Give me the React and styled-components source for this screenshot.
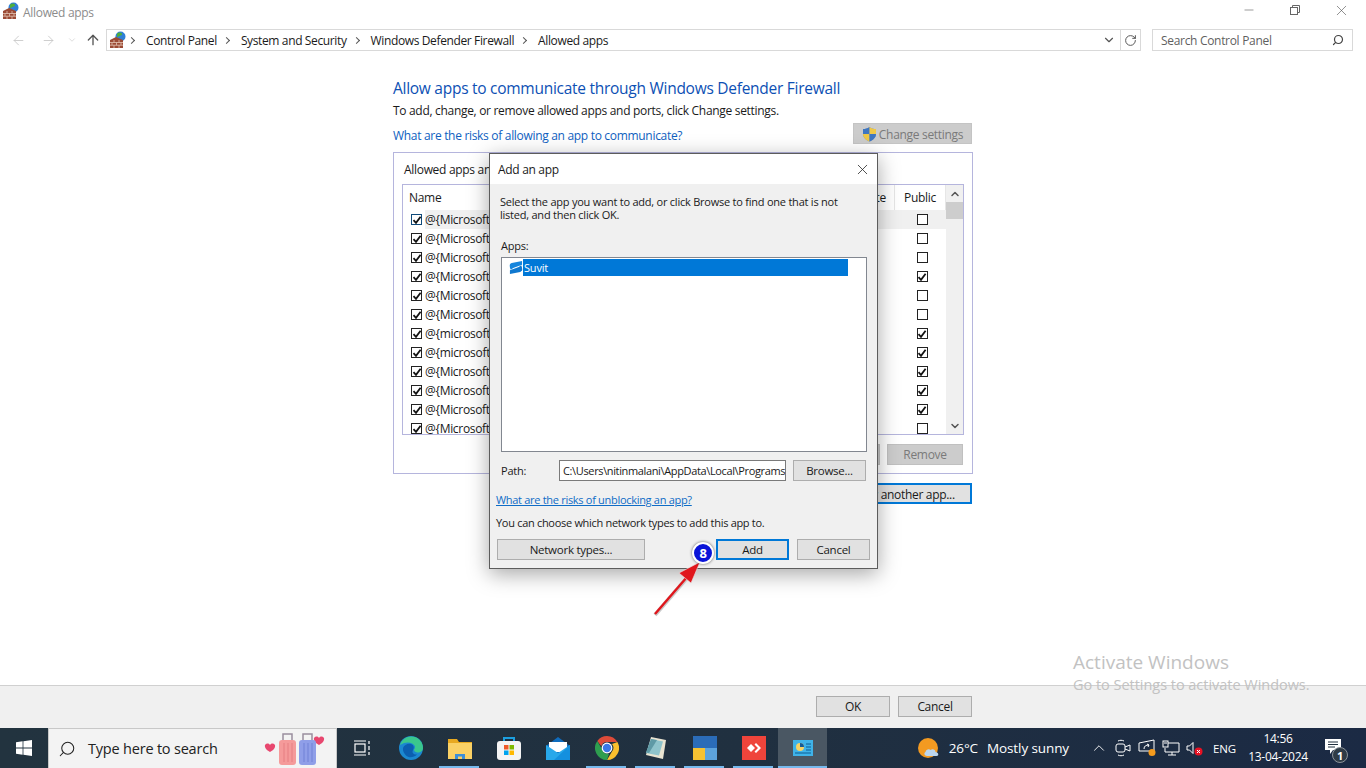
import React from 'react';
import styled, { createGlobalStyle } from 'styled-components';
import { Search, ArrowLeft, ArrowRight, ArrowUp, ChevronDown, ChevronUp, RotateCw, X, Minus } from 'lucide-react';

const GlobalStyle = createGlobalStyle`
  html, body { margin: 0; padding: 0; background: #fff; overflow: hidden; }
  * { box-sizing: border-box; }
  body { font-family: "Open Sans", "Liberation Sans", sans-serif; font-size: 12px; letter-spacing: -0.31px; color: #1a1a1a; }
`;

const publicChecks = [0, 0, 0, 1, 0, 0, 1, 1, 1, 1, 1, 0];
const rowNames = ['Microsoft', 'Microsoft', 'Microsoft', 'Microsoft', 'Microsoft', 'Microsoft', 'microsoft', 'microsoft', 'Microsoft', 'Microsoft', 'Microsoft', 'Microsoft'];

const FirewallIcon = ({ size = 18 }) => (
  <svg width={size} height={size} viewBox="0 0 18 18">
    <circle cx="11.5" cy="5.5" r="5" fill="#2f7fd6" />
    <path d="M8 2.5c2-1.5 4-1.500 5 0 .5 1.500-1 2-2.500 2.500S8.500 7 8 5.500z" fill="#4fae3c" />
    <path d="M1 9l6-3 7 3v8H1z" fill="#9b4a35" />
    <path d="M1 11.500h13M1 14.200h13M5 9v2.500M10 9v2.500M3 11.500v2.700M7.500 11.500v2.700M12 11.500v2.700M5 14.200V17M10 14.200V17" stroke="#e2c3b3" strokeWidth=".8" fill="none" />
  </svg>
);

const ShieldIcon = () => (
  <svg width="15" height="16" viewBox="0 0 15 16">
    <path d="M7.500 1C5.500 2.500 3.500 3 1 3v5c0 3.500 3 6 6.500 7.500C11 14 14 11.500 14 8V3c-2.500 0-4.500-.5-6.500-2z" fill="#6d93c4" />
    <path d="M7.500 1v7H1V3c2.500 0 4.500-.5 6.500-2z" fill="#3f76c0" />
    <path d="M7.500 1c2 1.500 4 2 6.500 2v5H7.500z" fill="#f0c846" />
    <path d="M7.500 8H1c0 3.500 3 6 6.500 7.500z" fill="#f0c846" />
    <path d="M7.500 8H14c0 3.500-3 6-6.500 7.500z" fill="#3f76c0" />
  </svg>
);

const SuvitLogo = () => (
  <svg width="15" height="15" viewBox="0 0 15 15">
    <path d="M14 .5v4L4.500 8 2 10C1 8.500 .8 6 .8 5c0-1 1.200-1.800 2.200-2.200z" fill="#1585dc" />
    <path d="M1 14.500v-4l9.500-3.500L13 5c1 1.500 1.200 4 1.200 5 0 1-1.200 1.800-2.200 2.200z" fill="#0f78cf" />
  </svg>
);

const CheckMark = () => (
  <svg width="10" height="10" viewBox="0 0 10 10">
    <path d="M1.500 5.200L4 7.800L8.600 1.800" fill="none" stroke="#111" strokeWidth="1.800" />
  </svg>
);

const WindowsLogo = () => (
  <svg width="16" height="16" viewBox="0 0 16 16">
    <path d="M0 2.300L6.600 1.300V7.600H0zM7.400 1.200L16 0V7.600H7.400zM0 8.400H6.600V14.700L0 13.700zM7.400 8.400H16V16L7.400 14.800z" fill="#fff" />
  </svg>
);

const LuggageArt = () => (
  <svg width="62" height="36" viewBox="0 0 62 36">
    <path d="M6 14c-2-3-6-1-5 2 .5 2 3 4 5 5 2-1 4.500-3 5-5 1-3-3-5-5-2z" fill="#e8476f" />
    <path d="M55 7c-2-3-6-1-5 2 .5 2 3 4 5 5 2-1 4.500-3 5-5 1-3-3-5-5-2z" fill="#e8476f" />
    <path d="M19 10V3h9v7M39 10V3h9v7" fill="none" stroke="#9a8f9f" strokeWidth="1.500" />
    <rect x="15" y="9" width="17" height="25" rx="3" fill="#f59a9a" />
    <rect x="35" y="9" width="17" height="25" rx="3" fill="#8f9ee8" />
    <path d="M20 12v19M24 12v19M28 12v19" stroke="#e67f82" strokeWidth="1" />
    <path d="M40 12v19M44 12v19M48 12v19" stroke="#7181d6" strokeWidth="1" />
  </svg>
);

const TaskViewIcon = () => (
  <svg width="16" height="16" viewBox="0 0 16 16" fill="none" stroke="#fff" strokeWidth="1.200">
    <path d="M0 1h12M0 15h12" />
    <rect x="1" y="4" width="10" height="8" />
    <path d="M15 1v3M15 6v4M15 12v3" />
  </svg>
);

const EdgeIcon = () => (
  <svg width="24" height="24" viewBox="0 0 24 24">
    <circle cx="12" cy="12" r="12" fill="#1b88d0" />
    <path d="M1 9C3 2 10-1 16 1c5 2 8 6 8 11 0 3-3 5-6 4.500-2-.5-3-1.500-3-3 1-1 1.500-2.500 .5-4C13 6 7 5 1 9z" fill="#3ac78d" />
    <path d="M4 12c1-3 5-5 8-4 3 1 3.500 4 2 6-1.500 3 1 5 4 4.500-3 3-8 4-11 1-2-2-3.500-5-3-7.500z" fill="#0b5fb0" />
  </svg>
);

const ExplorerIcon = () => (
  <svg width="24" height="22" viewBox="0 0 24 22">
    <path d="M0 2h9l2 3h13v17H0z" fill="#e8a920" />
    <rect x="0" y="6" width="24" height="16" fill="#fad165" />
    <path d="M7 22v-5h10v5h-3v-2.500h-4V22z" fill="#3d8fd8" />
  </svg>
);

const StoreIcon = () => (
  <svg width="24" height="24" viewBox="0 0 24 24">
    <path d="M7 6V2h10v4" fill="none" stroke="#1c9fe0" strokeWidth="2" />
    <rect x="0" y="5" width="24" height="19" rx="3" fill="#f4f4f4" />
    <rect x="7" y="9" width="4.500" height="4.500" fill="#ef5a29" />
    <rect x="12.500" y="9" width="4.500" height="4.500" fill="#7fba00" />
    <rect x="7" y="14.500" width="4.500" height="4.500" fill="#00a4ef" />
    <rect x="12.500" y="14.500" width="4.500" height="4.500" fill="#ffb900" />
  </svg>
);

const MailIcon = () => (
  <svg width="24" height="23" viewBox="0 0 24 23">
    <path d="M0 9L12 0l12 9v14H0z" fill="#0f6cbd" />
    <path d="M3 5h18v10H3z" fill="#fff" />
    <path d="M0 8l12 8 12-8v15H0z" fill="#28a8ea" />
    <path d="M24 8v15H8z" fill="#1490df" />
  </svg>
);

const ChromeIcon = () => (
  <svg width="24" height="24" viewBox="0 0 24 24">
    <path d="M12 0a12 12 0 0 1 10.400 6H12a6 6 0 0 0-5.700 4.200L2.300 5A12 12 0 0 1 12 0z" fill="#dd4b39" />
    <path d="M22.400 6A12 12 0 0 1 12 24l5-8.500A6 6 0 0 0 17 8z" fill="#fbc02d" />
    <path d="M12 24A12 12 0 0 1 2.300 5l5 8.800A6 6 0 0 0 14 17.700z" fill="#2e9e4f" />
    <circle cx="12" cy="12" r="5.400" fill="#fff" />
    <circle cx="12" cy="12" r="4.200" fill="#3b78e7" />
  </svg>
);

const NotepadIcon = () => (
  <svg width="24" height="24" viewBox="0 0 24 24">
    <path d="M7 1l15 3-3 19-17-4z" fill="#e9e4d2" />
    <path d="M7 3l12 2.500-4 14L2 17z" fill="#8fc4cc" />
    <path d="M7 3l6 1-8 13-3-.5z" fill="#5f9aa6" />
  </svg>
);

const TilesIcon = () => (
  <svg width="24" height="24" viewBox="0 0 24 24">
    <rect width="24" height="12" fill="#2b6cb8" />
    <rect y="12" width="12" height="12" fill="#f6c232" />
    <rect x="12" y="12" width="12" height="12" fill="#5da3dc" />
  </svg>
);

const AnyDeskIcon = () => (
  <svg width="24" height="24" viewBox="0 0 24 24">
    <rect width="24" height="24" fill="#ef443b" />
    <path d="M9 8l4 4-4 4-4-4z" fill="#fff" />
    <path d="M14 7l5 5-5 5-1.500-1.500L16 12l-3.500-3.500z" fill="#fff" />
  </svg>
);

const PanelAppIcon = () => (
  <svg width="20" height="16" viewBox="0 0 20 16">
    <rect width="20" height="16" fill="#3fb3e8" />
    <circle cx="7" cy="7" r="4" fill="#f6d365" />
    <path d="M7 3v4h4a4 4 0 0 0-4-4z" fill="#155b96" />
    <path d="M13 4h5M13 7h5M13 10h5M2 13h16" stroke="#0d5f94" strokeWidth="1.200" />
  </svg>
);

const WeatherIcon = () => (
  <svg width="22" height="22" viewBox="0 0 22 22">
    <circle cx="10" cy="11" r="10" fill="#f39a21" />
    <path d="M9 19c-2.500 0-3.500-3-1.500-4 .5-2.500 3.500-3.500 5-2 2-1.500 5-.5 5 2 3 0 4 4 1 4z" fill="#bcd6ee" />
  </svg>
);

const MeetIcon = () => (
  <svg width="16" height="18" viewBox="0 0 16 18" fill="none" stroke="#fff" strokeWidth="1">
    <rect x="1" y="5" width="9" height="8" rx="2" />
    <path d="M10 8l5-2v6l-5-2M3 2c2-1 4-1 6 0M3 16c2 1 4 1 6 0" />
  </svg>
);

const CastIcon = () => (
  <svg width="18" height="18" viewBox="0 0 18 18" fill="none" stroke="#fff" strokeWidth="1">
    <path d="M1 4l15-3v11H1z" />
    <path d="M6 10c0-3 2-4 5-4M9 5l2 1-1 2" />
    <circle cx="14" cy="13.500" r="3.500" fill="#f59b1d" stroke="none" />
  </svg>
);

const NetworkIcon = () => (
  <svg width="18" height="16" viewBox="0 0 18 16" fill="none" stroke="#fff" strokeWidth="1">
    <path d="M6 3h11v9H3V8M10 12v3M6 15h8" />
    <rect x="1" y="1" width="5" height="6" />
    <path d="M2 3h3" />
  </svg>
);

const VolumeIcon = () => (
  <svg width="18" height="18" viewBox="0 0 18 18">
    <path d="M1 7h2.500L7 3.500v11L3.500 11H1z" fill="none" stroke="#fff" strokeWidth="1" />
    <circle cx="12.500" cy="12.500" r="4" fill="#e81123" />
    <path d="M11 11l3 3M14 11l-3 3" stroke="#fff" strokeWidth="1" />
  </svg>
);

const NoticeIcon = () => (
  <svg width="16" height="15" viewBox="0 0 16 15">
    <path d="M0 0h16v11H8l-3 4v-4H0z" fill="#fff" />
    <path d="M3 3h10M3 5.500h10M3 8h7" stroke="#22303e" strokeWidth="1" />
  </svg>
);

const RestoreGlyph = () => (
  <svg width="10" height="10" viewBox="0 0 10 10" fill="none" stroke="#666" strokeWidth="1">
    <rect x=".5" y="2.500" width="7" height="7" />
    <path d="M2.500 2.500V.5h7v7h-2" />
  </svg>
);

const App = () => (
  <>
    <GlobalStyle />
    <Page>
      <TitleBar>
        <TitleIcon><FirewallIcon /></TitleIcon>
        <TitleText>Allowed apps</TitleText>
        <WindowControls>
          <WindowButton><Minus size={14} strokeWidth={1} /></WindowButton>
          <WindowButton><RestoreGlyph /></WindowButton>
          <WindowButton><X size={17} strokeWidth={0.9} /></WindowButton>
        </WindowControls>
      </TitleBar>

      <NavBar>
        <NavButtons>
          <NavArrow $faded><ArrowLeft size={15} strokeWidth={1.4} /></NavArrow>
          <NavArrow $faded><ArrowRight size={15} strokeWidth={1.4} /></NavArrow>
          <NavArrow $faded $narrow><ChevronDown size={10} strokeWidth={1.5} /></NavArrow>
          <NavArrow><ArrowUp size={16} strokeWidth={2} /></NavArrow>
        </NavButtons>
        <AddressBar>
          <AddressIcon><FirewallIcon /></AddressIcon>
          <Crumb>Control Panel</Crumb>
          <Crumb>System and Security</Crumb>
          <Crumb>Windows Defender Firewall</Crumb>
          <Crumb>Allowed apps</Crumb>
          <AddressTools>
            <AddressTool><ChevronDown size={14} strokeWidth={2} color="#555" /></AddressTool>
            <AddressTool $divided><RotateCw size={13} strokeWidth={1.8} color="#555" /></AddressTool>
          </AddressTools>
        </AddressBar>
        <SearchBar>
          <span>Search Control Panel</span>
          <Search size={12} strokeWidth={2.4} color="#444" transform="scale(-1,1)" />
        </SearchBar>
      </NavBar>

      <Main>
        <Content>
          <Heading>Allow apps to communicate through Windows Defender Firewall</Heading>
          <Intro>To add, change, or remove allowed apps and ports, click Change settings.</Intro>
          <LinkRow>
            <PlainLink>What are the risks of allowing an app to communicate?</PlainLink>
            <ChangeButton><ShieldIcon /><ChangeLabel>Change settings</ChangeLabel></ChangeButton>
          </LinkRow>
          <Panel>
            <Caption>Allowed apps an</Caption>
            <AppTable>
              <TableBody>
                <HeaderRow>
                  <HeaderCell>Name</HeaderCell>
                  <HeaderCell $center $offset="14px">Private</HeaderCell>
                  <HeaderCell $center>Public</HeaderCell>
                </HeaderRow>
                {rowNames.map((name, i) => (
                  <AppRow key={i}>
                    <NameCell $active={i === 0}>
                      <Box $focus={i === 0}><CheckMark /></Box>
                      <NameText $active={i === 0}>@{'{'}{name}</NameText>
                    </NameCell>
                    <CheckCell $active={i === 0}><Box><CheckMark /></Box></CheckCell>
                    <CheckCell $active={i === 0}>
                      <Box>{publicChecks[i] ? <CheckMark /> : null}</Box>
                    </CheckCell>
                  </AppRow>
                ))}
              </TableBody>
              <ScrollBar>
                <ScrollArrow><ChevronUp size={12} strokeWidth={3} color="#555" /></ScrollArrow>
                <ScrollThumb />
                <ScrollArrow $bottom><ChevronDown size={12} strokeWidth={3} color="#555" /></ScrollArrow>
              </ScrollBar>
            </AppTable>
            <PanelActions>
              <GrayButton $width="76px" $ml="0">Details...</GrayButton>
              <GrayButton $width="76px" $ml="7px">Remove</GrayButton>
            </PanelActions>
          </Panel>
          <AllowRow>
            <AllowButton>Allow another app...</AllowButton>
          </AllowRow>
        </Content>

        <Dialog>
          <DialogTitle>
            <span>Add an app</span>
            <X size={17} strokeWidth={1.1} color="#222" />
          </DialogTitle>
          <DialogBody>
            <DialogText>
              Select the app you want to add, or click Browse to find one that is not<br />
              listed, and then click OK.
            </DialogText>
            <AppsLabel>Apps:</AppsLabel>
            <AppList>
              <AppListRow>
                <AppListIcon><SuvitLogo /></AppListIcon>
                <Selected>Suvit</Selected>
              </AppListRow>
            </AppList>
            <PathRow>
              <PathLabel>Path:</PathLabel>
              <PathInput>C:\Users\nitinmalani\AppData\Local\Programs</PathInput>
              <DialogButton $width="73px">Browse...</DialogButton>
            </PathRow>
            <UnblockLink>What are the risks of unblocking an app?</UnblockLink>
            <NetworkNote>You can choose which network types to add this app to.</NetworkNote>
            <DialogActions>
              <DialogButton $width="148px">Network types...</DialogButton>
              <ActionGroup>
                <FocusButton $width="73px" $height="21px">Add</FocusButton>
                <DialogButton $width="73px">Cancel</DialogButton>
              </ActionGroup>
            </DialogActions>
          </DialogBody>
        </Dialog>

        <CalloutArrow width="60" height="60" viewBox="0 0 60 60">
          <path d="M5 56L37 19" stroke="#c8c8c8" strokeWidth="4" />
          <path d="M5 55L37 18" stroke="#e0161c" strokeWidth="2.400" />
          <path d="M50 3L41 24L29 14z" fill="#e0161c" stroke="#e8e8e8" strokeWidth=".6" />
        </CalloutArrow>
        <StepBadge>8</StepBadge>

        <Watermark>
          <WatermarkTitle>Activate Windows</WatermarkTitle>
          <WatermarkNote>Go to Settings to activate Windows.</WatermarkNote>
        </Watermark>
      </Main>

      <FooterBar>
        <GrayButton $width="74px" $ml="0" $enabled>OK</GrayButton>
        <GrayButton $width="74px" $ml="8px" $enabled>Cancel</GrayButton>
      </FooterBar>

      <Taskbar>
        <StartButton><WindowsLogo /></StartButton>
        <TaskSearch>
          <Search size={18} strokeWidth={1.4} color="#222" transform="scale(-1,1)" />
          <TaskSearchText>Type here to search</TaskSearchText>
          <LuggageSlot><LuggageArt /></LuggageSlot>
        </TaskSearch>
        <TaskSlot><TaskViewIcon /></TaskSlot>
        <TaskSlot><EdgeIcon /></TaskSlot>
        <TaskSlot $running><ExplorerIcon /></TaskSlot>
        <TaskSlot><StoreIcon /></TaskSlot>
        <TaskSlot><MailIcon /></TaskSlot>
        <TaskSlot $running><ChromeIcon /></TaskSlot>
        <TaskSlot $running><NotepadIcon /></TaskSlot>
        <TaskSlot $running><TilesIcon /></TaskSlot>
        <TaskSlot $running><AnyDeskIcon /></TaskSlot>
        <TaskSlot $running $current><PanelAppIcon /></TaskSlot>
        <Tray>
          <WeatherSlot><WeatherIcon /></WeatherSlot>
          <TrayText>26°C</TrayText>
          <TrayText>Mostly sunny</TrayText>
          <TrayIcon $left="21px"><ChevronUp size={18} strokeWidth={1.2} color="#fff" /></TrayIcon>
          <TrayIcon $left="6px"><MeetIcon /></TrayIcon>
          <TrayIcon $left="6px"><CastIcon /></TrayIcon>
          <TrayIcon $left="6px"><NetworkIcon /></TrayIcon>
          <TrayIcon $left="6px"><VolumeIcon /></TrayIcon>
          <LangLabel>ENG</LangLabel>
          <Clock><span>14:56</span><span>13-04-2024</span></Clock>
          <NoticeSlot>
            <NoticeIcon />
            <NoticeCount>1</NoticeCount>
          </NoticeSlot>
        </Tray>
      </Taskbar>
    </Page>
  </>
);

const Page = styled.div`
  width: 1366px;
  height: 768px;
  display: flex;
  flex-direction: column;
  overflow: hidden;
`;

const TitleBar = styled.header`
  height: 24px;
  display: flex;
  align-items: center;
  flex-shrink: 0;
`;

const TitleIcon = styled.span`
  display: flex;
  margin-left: 2px;
  margin-top: -2px;
`;

const TitleText = styled.span`
  margin-left: 3px;
  color: #8c8c8c;
`;

const WindowControls = styled.div`
  margin-left: auto;
  display: flex;
  margin-right: 2px;
  margin-top: -4px;
`;

const WindowButton = styled.span`
  width: 46px;
  height: 20px;
  display: flex;
  align-items: center;
  justify-content: center;
  color: #555;
`;

const NavBar = styled.nav`
  height: 32px;
  display: flex;
  align-items: center;
  flex-shrink: 0;
`;

const NavButtons = styled.div`
  display: flex;
  align-items: center;
  width: 106px;
  padding-left: 4px;
`;

const NavArrow = styled.span`
  display: flex;
  justify-content: center;
  width: ${(p) => (p.$narrow ? '15px' : '29px')};
  color: ${(p) => (p.$faded ? '#c8c8c8' : '#555')};
  &:nth-child(2) { width: 30px; }
  &:nth-child(3) { margin-left: 1px; }
  &:nth-child(4) { width: 22px; margin-left: 3px; }
`;

const AddressBar = styled.div`
  width: 1035px;
  height: 22px;
  border: 1px solid #d9d9d9;
  display: flex;
  align-items: center;
`;

const AddressIcon = styled.span`
  display: flex;
  margin-left: 2px;
  margin-right: -5px;
`;

const Crumb = styled.span`
  display: inline-flex;
  align-items: center;
  color: #1a1a1a;
  margin-left: 5px;
  letter-spacing: -0.37px;
  &::before {
    content: '';
    width: 4px;
    height: 4px;
    border-top: 1px solid #555;
    border-right: 1px solid #555;
    transform: rotate(45deg);
    margin-right: 12px;
    margin-left: 2px;
  }
`;

const AddressTools = styled.div`
  margin-left: auto;
  display: flex;
  height: 100%;
`;

const AddressTool = styled.span`
  width: ${(p) => (p.$divided ? '20px' : '22px')};
  display: flex;
  align-items: center;
  justify-content: center;
  border-left: ${(p) => (p.$divided ? '1px solid #d9d9d9' : 'none')};
`;

const SearchBar = styled.div`
  width: 201px;
  height: 22px;
  margin-left: 11px;
  border: 1px solid #d9d9d9;
  display: flex;
  align-items: center;
  justify-content: space-between;
  padding: 0 8px;
  color: #5f5f5f;
`;

const Main = styled.main`
  flex: 1;
  position: relative;
  min-height: 0;
`;

const Content = styled.div`
  width: 579px;
  margin-left: 393px;
  padding-top: 22px;
`;

const Heading = styled.h1`
  margin: 0;
  font-size: 15.500px;
  font-weight: 400;
  letter-spacing: -0.27px;
  line-height: 20px;
  color: #0d50b4;
`;

const Intro = styled.p`
  margin: 5px 0 0;
  line-height: 16px;
`;

const PlainLink = styled.span`
  color: #0f5fbf;
  padding-top: 3px;
`;

const LinkRow = styled.div`
  display: flex;
  align-items: center;
  justify-content: space-between;
  margin-top: 4px;
  height: 21px;
`;

const ChangeButton = styled.span`
  width: 119px;
  height: 21px;
  background: #cccccc;
  border: 1px solid #c4c4c4;
  color: #7a7a7a;
  display: flex;
  align-items: center;
  justify-content: center;
  gap: 2px;
`;

const ChangeLabel = styled.span`
  padding-top: 2px;
`;

const Panel = styled.section`
  margin-top: 8px;
  width: 580px;
  height: 322px;
  border: 1px solid #b5b5dd;
  padding: 0 8px;
`;

const Caption = styled.div`
  padding-left: 2px;
  margin-top: 8px;
  height: 23px;
  line-height: 17px;
`;

const AppTable = styled.div`
  height: 251px;
  width: 562px;
  border: 1px solid #b5b5dd;
  display: flex;
  overflow: hidden;
`;

const TableBody = styled.div`
  flex: 1;
  min-width: 0;
`;

const HeaderRow = styled.div`
  display: grid;
  grid-template-columns: 1fr 68px 51px;
  height: 25px;
`;

const HeaderCell = styled.span`
  display: flex;
  align-items: center;
  justify-content: ${(p) => (p.$center ? 'center' : 'flex-start')};
  padding-left: ${(p) => p.$offset || (p.$center ? '0' : '6px')};
  border-right: 1px solid #e6e6e6;
`;

const AppRow = styled.div`
  display: grid;
  grid-template-columns: 1fr 68px 51px;
  height: 19px;
`;

const NameCell = styled.div`
  display: flex;
  align-items: center;
  padding-left: 8px;
  gap: 3px;
  overflow: hidden;
`;

const NameText = styled.span`
  flex: 1;
  line-height: 19px;
  background: ${(p) => (p.$active ? '#f0f0f0' : 'transparent')};
  white-space: nowrap;
`;

const CheckCell = styled.div`
  display: flex;
  align-items: center;
  justify-content: center;
  padding-left: 3px;
  background: ${(p) => (p.$active ? '#f0f0f0' : 'transparent')};
`;

const Box = styled.span`
  width: 11px;
  height: 11px;
  flex-shrink: 0;
  border: 1px solid ${(p) => (p.$focus ? '#0f4a7a' : '#222')};
  display: flex;
  align-items: center;
  justify-content: center;
  background: #fff;
  svg { flex-shrink: 0; }
`;

const ScrollBar = styled.div`
  width: 17px;
  background: #f0f0f0;
  display: flex;
  flex-direction: column;
`;

const ScrollArrow = styled.span`
  height: 17px;
  display: flex;
  align-items: center;
  justify-content: center;
  margin-top: ${(p) => (p.$bottom ? 'auto' : '0')};
  flex-shrink: 0;
`;

const ScrollThumb = styled.span`
  height: 17px;
  background: #cdcdcd;
  flex-shrink: 0;
`;

const PanelActions = styled.div`
  display: flex;
  justify-content: flex-end;
  margin-top: 9px;
  padding-right: 1px;
`;

const GrayButton = styled.span`
  width: ${(p) => p.$width};
  height: 21px;
  margin-left: ${(p) => p.$ml};
  background: ${(p) => (p.$enabled ? '#e1e1e1' : '#cccccc')};
  border: 1px solid ${(p) => (p.$enabled ? '#adadad' : '#c0c0c0')};
  color: ${(p) => (p.$enabled ? '#1a1a1a' : '#7a7a7a')};
  display: flex;
  align-items: center;
  justify-content: center;
`;

const AllowRow = styled.div`
  display: flex;
  justify-content: flex-end;
  margin-top: 9px;
`;

const FocusButton = styled.span`
  width: ${(p) => p.$width};
  height: ${(p) => p.$height};
  background: #e1e1e1;
  border: 2px solid #0078d7;
  display: flex;
  align-items: center;
  justify-content: center;
  white-space: nowrap;
`;

const AllowButton = styled.span`
  width: 146px;
  height: 21px;
  background: #e1e1e1;
  border: 2px solid #0078d7;
  display: flex;
  align-items: center;
  justify-content: center;
  white-space: nowrap;
  padding: 1px 0 0 6px;
`;

const Dialog = styled.div`
  position: absolute;
  left: 489px;
  top: 97px;
  width: 389px;
  height: 416px;
  border: 1px solid #5c5c5c;
  background: #f0f0f0;
  box-shadow: 0 5px 20px rgba(0, 0, 0, 0.35);
  display: flex;
  flex-direction: column;
`;

const DialogTitle = styled.div`
  height: 30px;
  flex-shrink: 0;
  background: #fff;
  display: flex;
  align-items: center;
  justify-content: space-between;
  padding: 0 6px 0 8px;
`;

const DialogBody = styled.div`
  flex: 1;
  padding: 11px 7px 0 6px;
  display: flex;
  flex-direction: column;
`;

const DialogText = styled.p`
  margin: 0 0 0 4px;
  line-height: 13px;
  font-size: 11px;
  letter-spacing: -0.23px;
  white-space: nowrap;
`;

const AppsLabel = styled.div`
  margin: 18px 0 0 5px;
  line-height: 14px;
  font-size: 11px;
  letter-spacing: -0.2px;
`;

const AppList = styled.div`
  margin: 4px 3px 0 5px;
  height: 195px;
  background: #fff;
  border: 1px solid #828790;
  padding: 1px 18px 0 7px;
`;

const AppListRow = styled.div`
  display: flex;
  align-items: center;
  height: 17px;
`;

const AppListIcon = styled.span`
  display: flex;
  width: 14px;
`;

const Selected = styled.span`
  flex: 1;
  height: 17px;
  line-height: 17px;
  background: #0078d7;
  color: #fff;
  padding-left: 1px;
  font-size: 11px;
  letter-spacing: -0.2px;
`;

const PathRow = styled.div`
  display: flex;
  align-items: center;
  margin: 8px 0 0 5px;
`;

const PathLabel = styled.span`
  width: 58px;
  font-size: 11px;
  letter-spacing: -0.2px;
`;

const PathInput = styled.span`
  width: 227px;
  height: 21px;
  background: #fff;
  border: 1px solid #7a7a7a;
  padding-left: 3px;
  line-height: 19px;
  white-space: nowrap;
  overflow: hidden;
  margin-right: 7px;
  font-size: 11px;
  letter-spacing: -0.36px;
`;

const DialogButton = styled.span`
  width: ${(p) => p.$width};
  height: 21px;
  background: #e1e1e1;
  border: 1px solid #adadad;
  display: flex;
  align-items: center;
  justify-content: center;
  font-size: 11.500px;
  letter-spacing: -0.25px;
`;

const UnblockLink = styled.div`
  margin-top: 11px;
  line-height: 16px;
  color: #0f6cc6;
  text-decoration: underline;
  font-size: 11px;
  letter-spacing: -0.3px;
`;

const NetworkNote = styled.div`
  margin-top: 7px;
  line-height: 16px;
  font-size: 11px;
  letter-spacing: -0.3px;
`;

const DialogActions = styled.div`
  display: flex;
  justify-content: space-between;
  margin: 8px 0 0 1px;
`;

const ActionGroup = styled.div`
  display: flex;
  gap: 8px;
  font-size: 11.500px;
  letter-spacing: -0.25px;
`;

const CalloutArrow = styled.svg`
  position: absolute;
  left: 650px;
  top: 503px;
`;

const StepBadge = styled.span`
  position: absolute;
  left: 692px;
  top: 486px;
  width: 22px;
  height: 22px;
  border-radius: 50%;
  background: #0a14d8;
  border: 2px solid #fff;
  box-shadow: 0 0 3px rgba(0, 0, 0, 0.6);
  color: #fff;
  font-weight: 700;
  font-size: 13px;
  display: flex;
  align-items: center;
  justify-content: center;
`;

const Watermark = styled.div`
  position: absolute;
  left: 1073px;
  top: 594px;
  color: #c2c2c2;
  pointer-events: none;
`;

const WatermarkTitle = styled.div`
  font-size: 19px;
  letter-spacing: 0;
  line-height: 24px;
`;

const WatermarkNote = styled.div`
  font-size: 14.500px;
  letter-spacing: -0.03px;
  line-height: 22px;
`;

const FooterBar = styled.footer`
  height: 43px;
  flex-shrink: 0;
  background: #f0f0f0;
  border-top: 1px solid #d0d0d0;
  display: flex;
  justify-content: flex-end;
  align-items: center;
  padding-right: 394px;
  padding-bottom: 1px;
`;

const Taskbar = styled.div`
  height: 40px;
  flex-shrink: 0;
  display: flex;
  align-items: stretch;
  background: linear-gradient(90deg, #22333f 0%, #203040 55%, #1b2a44 100%);
  color: #fff;
`;

const StartButton = styled.div`
  width: 48px;
  display: flex;
  align-items: center;
  justify-content: center;
`;

const TaskSearch = styled.div`
  width: 289px;
  background: #f3f3f3;
  border: 1px solid #c8c8c8;
  border-bottom: none;
  display: flex;
  align-items: center;
  padding-left: 9px;
  color: #222;
`;

const TaskSearchText = styled.span`
  margin-left: 12px;
  font-size: 14.500px;
  letter-spacing: -0.2px;
`;

const LuggageSlot = styled.span`
  display: flex;
  margin-left: auto;
  margin-right: 10px;
`;

const TaskSlot = styled.div`
  width: 49px;
  display: flex;
  align-items: center;
  justify-content: center;
  position: relative;
  background: ${(p) => (p.$current ? '#4a5763' : 'transparent')};
  &::after {
    content: '';
    display: ${(p) => (p.$running ? 'block' : 'none')};
    position: absolute;
    left: ${(p) => (p.$current ? '0' : '4px')};
    right: ${(p) => (p.$current ? '0' : '5px')};
    bottom: 0;
    height: 2px;
    background: #76b9ed;
  }
`;

const Tray = styled.div`
  margin-left: auto;
  display: flex;
  align-items: center;
`;

const WeatherSlot = styled.span`
  display: flex;
`;

const TrayText = styled.span`
  margin-left: 9px;
  font-size: 13.500px;
  letter-spacing: -0.1px;
  white-space: nowrap;
`;

const TrayIcon = styled.span`
  display: flex;
  justify-content: center;
  width: 18px;
  margin-left: ${(p) => p.$left};
`;

const LangLabel = styled.span`
  margin-left: 9px;
  width: 23px;
  font-size: 11.500px;
  letter-spacing: -0.2px;
`;

const Clock = styled.div`
  width: 70px;
  margin-left: 7px;
  display: flex;
  flex-direction: column;
  align-items: center;
  line-height: 18px;
`;

const NoticeSlot = styled.div`
  width: 53px;
  align-self: stretch;
  position: relative;
  display: flex;
  align-items: center;
  justify-content: center;
  padding: 0 13px 3px 0;
`;

const NoticeCount = styled.span`
  position: absolute;
  right: 18px;
  top: 19px;
  width: 16px;
  height: 16px;
  border-radius: 50%;
  background: #2f3b46;
  border: 1px solid #8d949a;
  font-size: 11px;
  font-weight: 700;
  display: flex;
  align-items: center;
  justify-content: center;
`;

export default App;
